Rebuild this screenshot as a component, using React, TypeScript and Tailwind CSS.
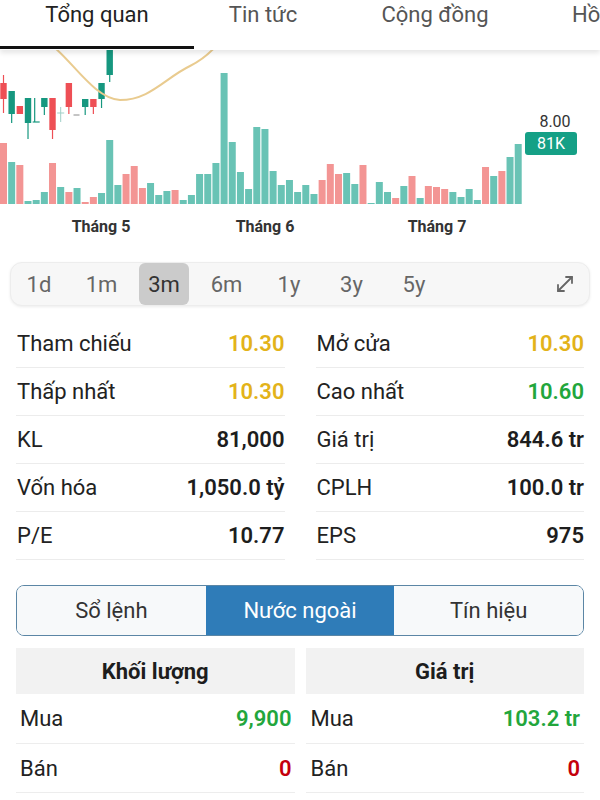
import { MoveDiagonal } from "lucide-react";

type Bar = [number, "t" | "p"];

// volume bars: top y on the page and colour (t = up, p = down)
const bars: Bar[] = [
  [143, "p"], [162, "t"], [165, "p"], [201, "t"], [200, "t"], [192, "t"], [163, "p"], [187, "t"],
  [192, "p"], [188, "t"], [202, "p"], [197, "p"], [193, "t"], [140, "t"], [185, "t"], [174, "p"],
  [166, "p"], [188, "p"], [183, "t"], [195, "t"], [191, "t"], [190, "p"], [200, "t"], [195, "t"],
  [174, "t"], [174, "t"], [163, "t"], [73, "t"], [142, "t"], [172, "t"], [189, "t"], [127, "t"],
  [129, "t"], [171, "t"], [185, "t"], [180, "t"], [192, "t"], [185, "t"], [194, "t"], [180, "p"],
  [164, "p"], [174, "p"], [173, "t"], [184, "t"], [165, "p"], [203, "t"], [182, "t"], [192, "t"],
  [198, "p"], [186, "t"], [176, "p"], [198, "t"], [186, "p"], [187, "p"], [189, "p"], [192, "t"],
  [197, "t"], [189, "t"], [200, "t"], [167, "p"], [176, "t"], [171, "p"], [157, "t"], [144, "t"],
];

// candles: index, body top, body bottom, wick top, wick bottom, colour
const candles = [
  { i: 0, top: 83, bottom: 99, hi: 75, lo: 113, c: "r" },
  { i: 1, top: 91, bottom: 114, hi: 91, lo: 123, c: "g" },
  { i: 2, top: 106, bottom: 114, hi: 106, lo: 114, c: "r" },
  { i: 3, top: 98, bottom: 123, hi: 98, lo: 139, c: "g" },
  { i: 5, top: 98, bottom: 107, hi: 98, lo: 115, c: "g" },
  { i: 6, top: 98, bottom: 130, hi: 98, lo: 139, c: "r" },
  { i: 8, top: 83, bottom: 107, hi: 83, lo: 114, c: "r" },
  { i: 10, top: 99, bottom: 107, hi: 99, lo: 115, c: "g" },
  { i: 11, top: 99, bottom: 107, hi: 99, lo: 114, c: "r" },
  { i: 12, top: 83, bottom: 99, hi: 83, lo: 108, c: "g" },
  { i: 13, top: 40, bottom: 75, hi: 40, lo: 82, c: "g" },
];

const PITCH = 8.17;
const OFF = 50;

const PriceChart = () => (
  <svg width={600} height={200} viewBox="0 0 600 200" className="block">
    {bars.map(([top, c], i) => (
      <rect
        key={i}
        x={i * PITCH}
        y={top - OFF}
        width={7}
        height={204 - top}
        fill={c === "t" ? "#69c3b5" : "#f39594"}
      />
    ))}
    {candles.map((k) => {
      const cx = k.i * PITCH + 3.5;
      const col = k.c === "g" ? "#16977f" : "#ee4f55";
      return (
        <g key={k.i}>
          <line x1={cx} x2={cx} y1={k.hi - OFF} y2={k.lo - OFF} stroke={col} strokeWidth={1.2} />
          <rect x={cx - 3.2} y={k.top - OFF} width={6.4} height={k.bottom - k.top} fill={col} />
        </g>
      );
    })}
    {/* doji at index 4 */}
    <line x1={4 * PITCH + 2} x2={4 * PITCH + 2} y1={98 - OFF} y2={122 - OFF} stroke="#16977f" strokeWidth={1.2} />
    <line x1={4 * PITCH} x2={4 * PITCH + 7} y1={122 - OFF} y2={122 - OFF} stroke="#16977f" strokeWidth={1.2} />
    {/* cross at index 7 */}
    <line x1={7 * PITCH + 3.5} x2={7 * PITCH + 3.5} y1={107 - OFF} y2={122 - OFF} stroke="#9fcfc7" strokeWidth={1} />
    <line x1={7 * PITCH} x2={7 * PITCH + 7} y1={113 - OFF} y2={113 - OFF} stroke="#9fcfc7" strokeWidth={1} />
    {/* dash at index 9 */}
    <line x1={9 * PITCH} x2={9 * PITCH + 6} y1={115 - OFF} y2={115 - OFF} stroke="#8a8a8a" strokeWidth={1} />

    <path
      d="M55 -2 C75 15, 95 48, 120 50 C150 50, 165 28, 190 16 C200 11, 208 5, 216 -4"
      fill="none"
      stroke="#e9cb8f"
      strokeWidth={2}
    />

    <text x={555} y={77} textAnchor="middle" fontSize={16} fill="#333">
      8.00
    </text>
    <rect x={525} y={82} width={52} height={23} rx={3} fill="#15a086" />
    <text x={551} y={99} textAnchor="middle" fontSize={16} fill="#ffffff">
      81K
    </text>

    <text x={101} y={182} textAnchor="middle" fontSize={16} fontWeight={700} fill="#333">
      Tháng 5
    </text>
    <text x={265} y={182} textAnchor="middle" fontSize={16} fontWeight={700} fill="#333">
      Tháng 6
    </text>
    <text x={437} y={182} textAnchor="middle" fontSize={16} fontWeight={700} fill="#333">
      Tháng 7
    </text>
  </svg>
);

const periods = ["1d", "1m", "3m", "6m", "1y", "3y", "5y"];

const left = [
  { label: "Tham chiếu", value: "10.30", color: "text-[#e3b31a]" },
  { label: "Thấp nhất", value: "10.30", color: "text-[#e3b31a]" },
  { label: "KL", value: "81,000", color: "text-[#1d1d1d]" },
  { label: "Vốn hóa", value: "1,050.0 tỷ", color: "text-[#1d1d1d]" },
  { label: "P/E", value: "10.77", color: "text-[#1d1d1d]" },
];

const right = [
  { label: "Mở cửa", value: "10.30", color: "text-[#e3b31a]" },
  { label: "Cao nhất", value: "10.60", color: "text-[#22a63c]" },
  { label: "Giá trị", value: "844.6 tr", color: "text-[#1d1d1d]" },
  { label: "CPLH", value: "100.0 tr", color: "text-[#1d1d1d]" },
  { label: "EPS", value: "975", color: "text-[#1d1d1d]" },
];

type Row = { label: string; value: string; color: string };

const StatColumn = ({ rows }: { rows: Row[] }) => (
  <div className="flex flex-col">
    {rows.map((row) => (
      <div
        key={row.label}
        className="flex h-[48px] items-center justify-between border-b border-[#ececec] pl-[1px] text-[22px]"
      >
        <span className="text-[#222]">{row.label}</span>
        <span className={`font-semibold ${row.color}`}>{row.value}</span>
      </div>
    ))}
  </div>
);

const ForeignTable = ({ title, buy, sell, pad }: { title: string; buy: string; sell: string; pad: string }) => (
  <div className="flex flex-col">
    <div className="flex h-[46px] items-center justify-center bg-[#f2f2f2] text-[22px] font-bold text-[#1d1d1d]">
      {title}
    </div>
    <div className={`flex h-[50px] items-center justify-between border-b border-[#ededed] text-[22px] ${pad}`}>
      <span className="text-[#222]">Mua</span>
      <span className="font-semibold text-[#22a63c]">{buy}</span>
    </div>
    <div className={`flex h-[49px] items-center justify-between border-b border-[#ededed] text-[22px] ${pad}`}>
      <span className="text-[#222]">Bán</span>
      <span className="font-semibold text-[#c4000c]">{sell}</span>
    </div>
  </div>
);

export default function App() {
  return (
    <div className="h-[800px] w-[600px] overflow-hidden bg-white font-['Roboto',sans-serif]">
      {/* top tabs */}
      <div className="relative z-10 flex h-[50px] overflow-hidden bg-white text-[22px] leading-[30px] shadow-[0_3px_5px_rgba(0,0,0,0.10)]">
        <div className="relative w-[194px] shrink-0 text-center text-[#222]">
          Tổng quan
          <div className="absolute bottom-[1px] left-0 h-[3px] w-full bg-[#111]" />
        </div>
        <div className="w-[138px] shrink-0 text-center text-[#555]">Tin tức</div>
        <div className="w-[206px] shrink-0 text-center text-[#555]">Cộng đồng</div>
        <div className="w-[62px] shrink-0 overflow-hidden whitespace-nowrap pl-[34px] text-[#555]">Hồ sơ</div>
      </div>

      <PriceChart />

      {/* period selector */}
      <div className="mx-[10px] mt-[12px] flex h-[44px] items-center rounded-[12px] border border-[#ededed] bg-[#f7f7f7] pl-[3px] pr-[12px] text-[22px] text-[#666] shadow-[0_1px_3px_rgba(0,0,0,0.08)]">
        <div className="flex h-full items-center gap-[12.5px]">
          {periods.map((p) => (
            <div
              key={p}
              className={
                p === "3m"
                  ? "flex h-full w-[50px] items-center justify-center rounded-md bg-[#cbcbcb] text-[#333]"
                  : "flex h-full w-[50px] items-center justify-center"
              }
            >
              {p}
            </div>
          ))}
        </div>
        <MoveDiagonal className="ml-auto h-[24px] w-[24px] text-[#666]" strokeWidth={1.8} />
      </div>

      {/* stats */}
      <div className="mt-[14px] grid grid-cols-2 gap-x-[31px] px-4">
        <StatColumn rows={left} />
        <StatColumn rows={right} />
      </div>

      {/* segmented tabs */}
      <div className="mx-4 mt-[25px] flex h-[51px] overflow-hidden rounded-lg border border-[#5b86a5] text-[22px]">
        <div className="flex flex-1 items-center justify-center bg-[#f7f9fa] text-[#333]">Sổ lệnh</div>
        <div className="flex flex-1 items-center justify-center bg-[#2f7cb8] text-white">Nước ngoài</div>
        <div className="flex flex-1 items-center justify-center bg-[#f7f9fa] text-[#333]">Tín hiệu</div>
      </div>

      {/* foreign trading */}
      <div className="mt-[12px] grid grid-cols-2 gap-x-[11px] px-4">
        <ForeignTable title="Khối lượng" buy="9,900" sell="0" pad="pl-1 pr-[3px]" />
        <ForeignTable title="Giá trị" buy="103.2 tr" sell="0" pad="pl-[5px] pr-1" />
      </div>
    </div>
  );
}
